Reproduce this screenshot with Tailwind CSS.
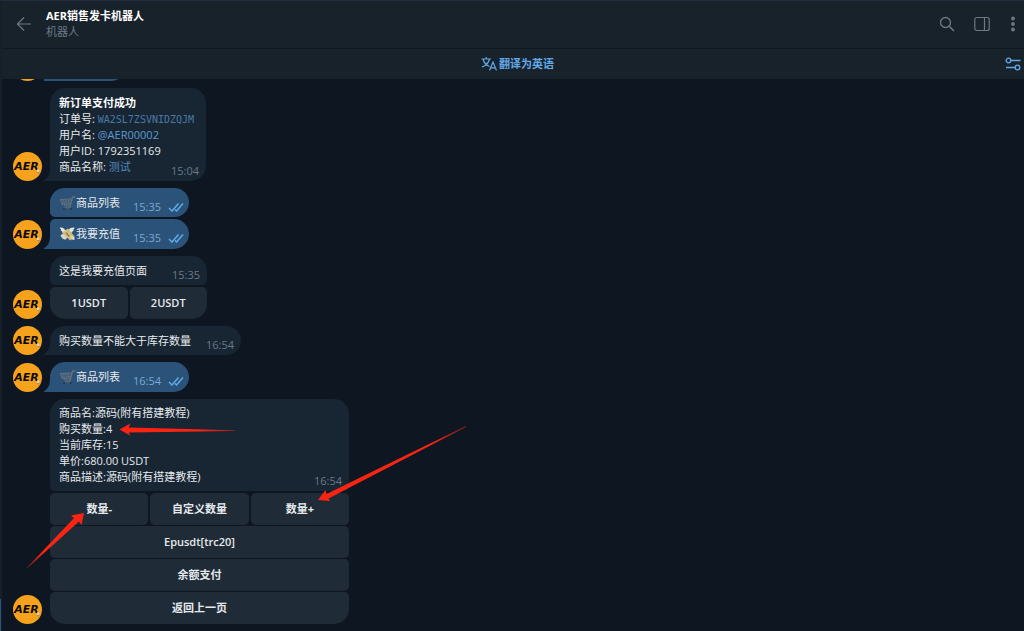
<!DOCTYPE html>
<html lang="zh-CN">
<head>
    <meta charset="UTF-8">
    <meta name="viewport" content="width=device-width, initial-scale=1.0">
    <title>AER销售发卡机器人</title>
    <script src="https://cdn.jsdelivr.net/npm/@tailwindcss/browser@4"></script>
</head>
<body class="bg-[#0e1621] text-[11px] leading-4 text-[#e6eaed] font-['Open_Sans','Noto_Sans_CJK_SC',sans-serif]">

    <!-- shared icons -->
    <svg class="hidden">
        <symbol id="avatar" viewBox="0 0 29 29">
            <circle cx="14.5" cy="14.5" r="14.5" fill="#f6a21c"/>
            <text x="13.500" y="18" text-anchor="middle" font-family="DejaVu Sans, sans-serif" font-size="11" font-weight="bold" font-style="italic" fill="#0c0a06">AER</text>
            <path d="M24 17l2.500 1-.5 2.500-2-.3z" fill="#d8d4cc"/>
            <path d="M24.500 20.500l2 .5" stroke="#6d6a64" stroke-width=".8"/>
        </symbol>
        <symbol id="checks" viewBox="0 0 17 10">
            <path d="M1 6L4 9L10.500 1.500M7 7.500L8.500 9L15 1.500" fill="none" stroke="#5fabe8" stroke-width="1.500"/>
        </symbol>
        <symbol id="tail" viewBox="0 0 6 14">
            <path d="M6 0C6 7 4 11 0 13V14H6z" fill="currentColor"/>
        </symbol>
        <symbol id="cart" viewBox="0 0 17 16">
            <g fill="none" stroke="#66737d">
                <path d="M15.500 2h-2l-2.200 9H5" stroke-width="1.200"/>
                <path d="M13 4L1.500 4.500l2 5 8.300-.5" stroke-width="1.100"/>
                <path d="M2.200 6.200l10.300-.5M3 8l9-.5M4.200 4.400l1.300 5M6.800 4.300l.8 5M9.600 4.100l.2 5" stroke-width=".7"/>
                <path d="M14 2h2.500" stroke="#8b6a5c"/>
                <path d="M11.300 11l.7 1.800H4.500" stroke-width="1"/>
            </g>
            <circle cx="5" cy="13.800" r="1.200" fill="#303a44"/>
            <circle cx="12" cy="13.800" r="1.200" fill="#303a44"/>
        </symbol>
        <symbol id="money" viewBox="0 0 17 16">
            <path d="M7 6C6 2 3 1 1 1.500c0 1 .5 1.500 1 2-.5.500 0 1.500 1 1.800 0 1 1 1.600 2 1.700z" fill="#e6e2d6"/>
            <path d="M9 5c1-3 4-4 6.500-3.500 0 1-.5 1.500-1 2 .5.500 0 1.500-1 1.800 0 1-1 1.600-2 1.700z" fill="#e6e2d6"/>
            <path d="M1.500 9.500l3-2.500 4 4-1.500 2.500c-2 .5-2-.8-3-.8s-1.500-.8-1-1.500c-1-.2-1.500-1-1.500-1.700z" fill="#d9d5c6"/>
            <path d="M3 6.500l6-4 6.500 8-4.500 4z" fill="#c3bb8f"/>
            <path d="M5 5.200l2.200-1.500 6.800 8.300-1.800 1.500z" fill="#e8c65a"/>
            <path d="M7 6.500l3.500 4" stroke="#8a7e50" stroke-width="1.400"/>
            <path d="M12 10l3.500 1v3l-3-.5z" fill="#dcd8ca"/>
        </symbol>
    </svg>

    <div class="relative flex min-h-screen flex-col border-t border-l-2 border-t-[#202d3c] border-l-[#152029]">

        <header class="flex h-12 items-center border-b border-[#101922] bg-[#18222b] pr-[7px] pb-px pl-3.5">
            <button aria-label="返回" class="w-[30px] text-[#6c7883]">
                <svg class="h-4 w-4" viewBox="0 0 16 16" fill="none" stroke="currentColor" stroke-width="1.200"><path d="M15 8H1.500M8 1.500L1.500 8L8 14.500"/></svg>
            </button>
            <div class="flex-1">
                <h1 class="font-bold text-white">AER销售发卡机器人</h1>
                <p class="text-[#6c7b8a]">机器人</p>
            </div>
            <div class="flex items-center gap-[19px] text-[#6c7883]">
                <button aria-label="搜索">
                    <svg class="h-4 w-4" viewBox="0 0 16 16" fill="none" stroke="currentColor" stroke-width="1.300"><circle cx="6.500" cy="6.500" r="5"/><path d="M10 10L15 15" stroke-width="1.600"/></svg>
                </button>
                <button aria-label="侧栏">
                    <svg class="h-4 w-4" viewBox="0 0 16 16" fill="none" stroke="currentColor" stroke-width="1.200"><rect x=".8" y="1.500" width="14.400" height="13" rx="2"/><path d="M10.500 1.500v13"/></svg>
                </button>
                <button aria-label="更多">
                    <svg class="h-4 w-2" viewBox="0 0 8 16" fill="currentColor"><circle cx="4" cy="2.500" r="1.900"/><circle cx="4" cy="8" r="1.900"/><circle cx="4" cy="13.500" r="1.900"/></svg>
                </button>
            </div>
        </header>

        <div class="flex h-[30px] items-center bg-[#18222b] pr-[3px] text-[#62a8e6]">
            <span class="w-7"></span>
            <button class="flex flex-1 items-center justify-center gap-0.5 font-bold">
                <svg class="h-4 w-4" viewBox="0 0 16 16" fill="none" stroke="currentColor" stroke-width="1.200"><path d="M.5 3h9.500M5.200 1v2M2 3c1 4 4 6.500 6.500 7.500M8.500 3C7.500 7 4 10 1 11M8.500 14.500L12 6l3.500 8.500M9.700 11.800h4.600"/></svg>
                <span>翻译为英语</span>
            </button>
            <button aria-label="翻译设置">
                <svg class="h-4 w-4" viewBox="0 0 16 16" fill="none" stroke="currentColor" stroke-width="1.300"><circle cx="3.500" cy="4.500" r="2.300"/><path d="M6 4.500h9.500M1 11.500h9.500"/><circle cx="12.500" cy="11.500" r="2.300"/></svg>
            </button>
        </div>

        <main class="flex flex-col items-start gap-[7px] overflow-hidden pb-[7px] pl-[11px]">

            <!-- bottom edge of the message scrolled away -->
            <div class="flex h-0.5 items-end gap-0.5">
                <svg class="h-[29px] w-[29px] shrink-0"><use href="#avatar"/></svg>
                <div class="h-[29px] w-[82px] rounded-br-[15px] bg-[#2b5278]"></div>
            </div>

            <section class="flex items-end gap-0.5">
                <svg class="h-[29px] w-[29px]"><use href="#avatar"/></svg>
                <div class="flex items-end">
                    <svg class="h-3.5 w-1.5 text-[#182533]"><use href="#tail"/></svg>
                    <div class="h-[93px] w-[156px] rounded-[15px] rounded-bl-none bg-[#182533] pt-[7px] pr-[7px] pl-[9px]">
                        <p class="font-bold text-white">新订单支付成功</p>
                        <p>订单号: <code class="font-['DejaVu_Sans_Mono',monospace] text-[10px] leading-none text-[#487aa8]">WA2SL7ZSVNIDZQJM</code></p>
                        <p>用户名: <a href="#" class="text-[#5b9bd0]">@AER00002</a></p>
                        <p>用户ID: 1792351169</p>
                        <div class="flex justify-between">
                            <p>商品名称: <a href="#" class="text-[#4f86b8]">测试</a></p>
                            <time class="pt-1 text-[#6a7988]">15:04</time>
                        </div>
                    </div>
                </div>
            </section>

            <section class="flex items-end gap-0.5">
                <svg class="h-[29px] w-[29px]"><use href="#avatar"/></svg>
                <div class="flex flex-col gap-0.5">
                    <div class="ml-1.5 flex h-[29px] w-[139px] items-center rounded-[15px] rounded-bl-[5px] bg-[#2b5278] pl-[9px]">
                        <svg class="h-4 w-[17px]" role="img" aria-label="购物车"><use href="#cart"/></svg>
                        <span class="flex-1">商品列表</span>
                        <time class="pt-2 text-[#7da8d3]">15:35</time>
                        <svg class="mt-2 mr-1 ml-[7px] h-2.5 w-[17px]"><use href="#checks"/></svg>
                    </div>
                    <div class="flex items-end">
                        <svg class="h-3.5 w-1.5 text-[#2b5278]"><use href="#tail"/></svg>
                        <div class="flex h-[30px] w-[139px] items-center rounded-[15px] rounded-tl-[5px] rounded-bl-none bg-[#2b5278] pl-[9px]">
                            <svg class="h-4 w-[17px]" role="img" aria-label="钱"><use href="#money"/></svg>
                            <span class="flex-1">我要充值</span>
                            <time class="pt-2 text-[#7da8d3]">15:35</time>
                            <svg class="mt-2 mr-1 ml-[7px] h-2.5 w-[17px]"><use href="#checks"/></svg>
                        </div>
                    </div>
                </div>
            </section>

            <section class="flex items-end gap-2">
                <svg class="h-[29px] w-[29px]"><use href="#avatar"/></svg>
                <div class="flex w-[157px] flex-col gap-0.5">
                    <div class="flex h-[29px] items-center justify-between rounded-t-[15px] rounded-b-[5px] bg-[#182533] pr-[7px] pl-[9px]">
                        <p>这是我要充值页面</p>
                        <time class="pt-2 text-[#6a7988]">15:35</time>
                    </div>
                    <div class="grid grid-cols-2 gap-0.5 font-semibold">
                        <button class="h-8 rounded-[5px] rounded-bl-[15px] bg-[#1f2c38]">1USDT</button>
                        <button class="h-8 rounded-[5px] rounded-br-[15px] bg-[#1f2c38]">2USDT</button>
                    </div>
                </div>
            </section>

            <section class="flex items-end gap-0.5">
                <svg class="h-[29px] w-[29px]"><use href="#avatar"/></svg>
                <div class="flex items-end">
                    <svg class="h-3.5 w-1.5 text-[#182533]"><use href="#tail"/></svg>
                    <div class="flex h-[29px] w-[191px] items-center justify-between rounded-[15px] rounded-bl-none bg-[#182533] pr-[7px] pl-[9px]">
                        <p>购买数量不能大于库存数量</p>
                        <time class="pt-2 text-[#6a7988]">16:54</time>
                    </div>
                </div>
            </section>

            <section class="flex items-end gap-0.5">
                <svg class="h-[29px] w-[29px]"><use href="#avatar"/></svg>
                <div class="flex items-end">
                    <svg class="h-3.5 w-1.5 text-[#2b5278]"><use href="#tail"/></svg>
                    <div class="flex h-[30px] w-[139px] items-center rounded-[15px] rounded-bl-none bg-[#2b5278] pl-[9px]">
                        <svg class="h-4 w-[17px]" role="img" aria-label="购物车"><use href="#cart"/></svg>
                        <span class="flex-1">商品列表</span>
                        <time class="pt-2 text-[#7da8d3]">16:54</time>
                        <svg class="mt-2 mr-1 ml-[7px] h-2.5 w-[17px]"><use href="#checks"/></svg>
                    </div>
                </div>
            </section>

            <section class="flex items-end gap-2">
                <svg class="h-[29px] w-[29px]"><use href="#avatar"/></svg>
                <div class="flex w-[299px] flex-col gap-0.5">
                    <div class="flex h-[92px] items-end justify-between rounded-t-[15px] rounded-b-[5px] bg-[#182533] pr-[7px] pb-1.5 pl-[9px]">
                        <div>
                            <p>商品名:源码(附有搭建教程)</p>
                            <p>购买数量:4</p>
                            <p>当前库存:15</p>
                            <p>单价:680.00 USDT</p>
                            <p>商品描述:源码(附有搭建教程)</p>
                        </div>
                        <time class="-mb-1 text-[#6a7988]">16:54</time>
                    </div>
                    <div class="grid grid-cols-3 gap-x-0.5 gap-y-px font-semibold">
                        <button class="h-8 rounded-[5px] bg-[#1f2c38] font-bold">数量-</button>
                        <button class="h-8 rounded-[5px] bg-[#1f2c38] font-bold">自定义数量</button>
                        <button class="h-8 rounded-[5px] bg-[#1f2c38] font-bold">数量+</button>
                        <button class="col-span-3 h-8 rounded-[5px] bg-[#1f2c38]">Epusdt[trc20]</button>
                        <button class="col-span-3 h-8 rounded-[5px] bg-[#1f2c38] font-bold">余额支付</button>
                        <button class="col-span-3 h-8 rounded-[5px] rounded-b-[15px] bg-[#1f2c38] font-bold">返回上一页</button>
                    </div>
                </div>
            </section>
        </main>

        <!-- red arrows drawn over the chat -->
        <svg class="pointer-events-none absolute top-[419px] left-[18px] h-[160px] w-[460px]" viewBox="20 420 460 160">
            <defs>
                <linearGradient id="fade1" gradientUnits="userSpaceOnUse" x1="200" y1="430" x2="236" y2="431"><stop stop-color="#fb2413"/><stop offset="1" stop-color="#fb2413" stop-opacity=".5"/></linearGradient>
                <linearGradient id="fade2" gradientUnits="userSpaceOnUse" x1="430" y1="444" x2="466" y2="427"><stop stop-color="#fb2413"/><stop offset="1" stop-color="#fb2413" stop-opacity=".5"/></linearGradient>
                <linearGradient id="fade3" gradientUnits="userSpaceOnUse" x1="45" y1="551" x2="28" y2="567"><stop stop-color="#fb2413"/><stop offset="1" stop-color="#fb2413" stop-opacity=".5"/></linearGradient>
            </defs>
            <path d="M119.500 429.500L130.500 423.500L128.500 427.500L235 430.300L235 431L128.500 432.500L130.500 435.800z" fill="url(#fade1)"/>
            <path d="M318 500L325.500 490L326.500 494L466 426L466 427L328.500 498.500L330 501z" fill="url(#fade2)"/>
            <path d="M84 513L81.500 525L79 521.500L27.500 568L27 567.500L74 518L71 515.500z" fill="url(#fade3)"/>
        </svg>

        <!-- selected item of the chat list at the left edge -->
        <div class="absolute bottom-0 -left-0.5 h-8 w-px bg-[#2b5278]"></div>
    </div>
</body>
</html>
